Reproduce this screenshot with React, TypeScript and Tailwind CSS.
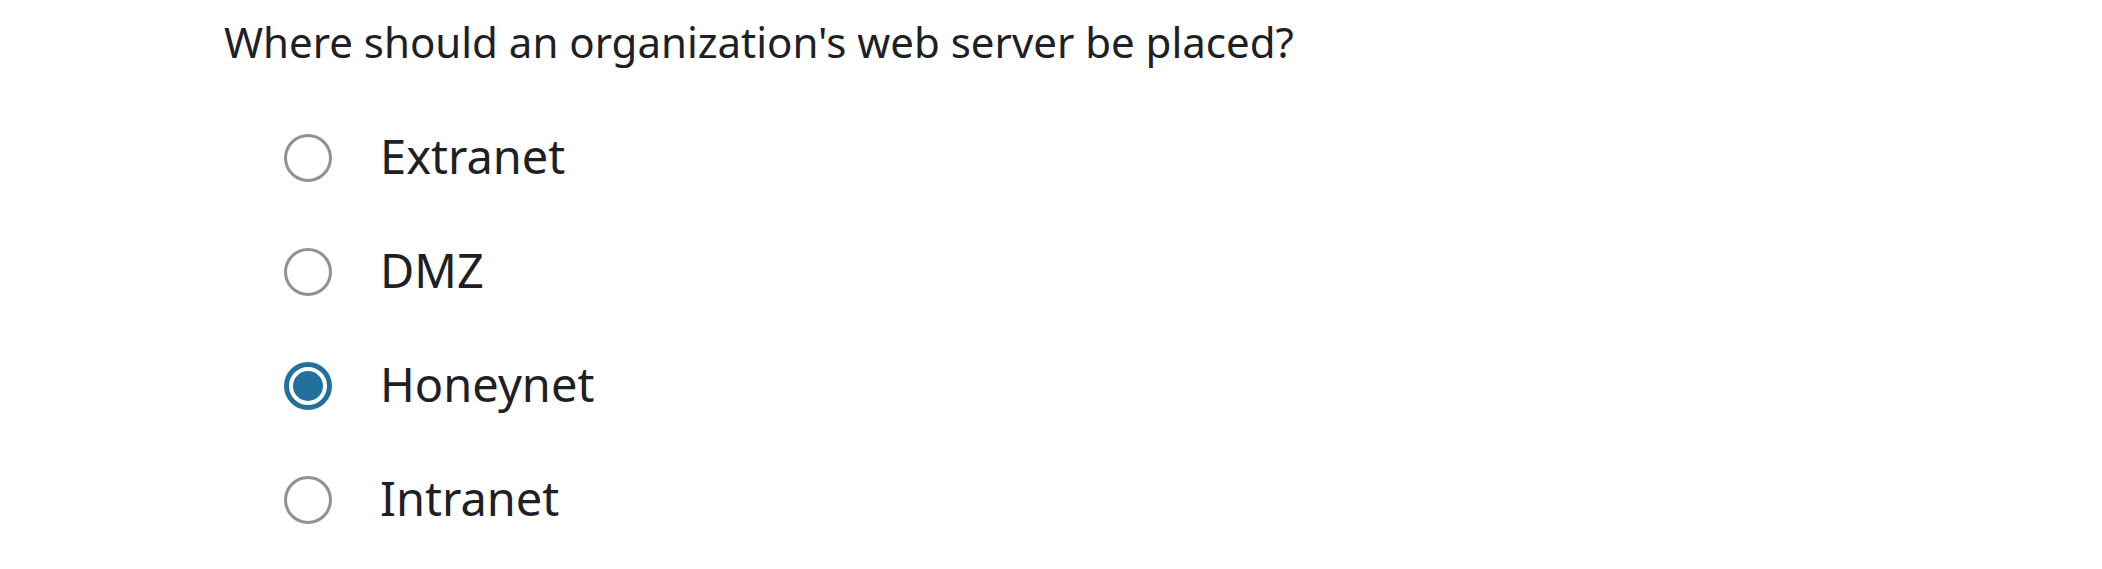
import React from 'react';

const options = ['Extranet', 'DMZ', 'Honeynet', 'Intranet'];
const selected = 'Honeynet';

function Radio({ checked }: { checked: boolean }) {
  if (checked) {
    return (
      <span className="flex h-[48px] w-[48px] shrink-0 items-center justify-center rounded-full border-[5px] border-[#22709b] bg-white">
        <span className="h-[30px] w-[30px] rounded-full bg-[#22709b]" />
      </span>
    );
  }
  return <span className="h-[48px] w-[48px] shrink-0 rounded-full border-[3px] border-[#8f9295] bg-white" />;
}

export default function App() {
  return (
    <div className="min-h-screen bg-white font-['Noto_Sans',sans-serif] text-[#1d2125]">
      <div className="pl-[224px] pt-[14px]">
        <p className="text-[42px] leading-[56px]">Where should an organization's web server be placed?</p>
        <div className="mt-[64px] flex flex-col gap-[66px] pl-[60px]">
          {options.map((o) => (
            <label key={o} className="flex h-[48px] items-center">
              <Radio checked={o === selected} />
              <span className="ml-[48px] pb-[4px] text-[47px] leading-[48px]">{o}</span>
            </label>
          ))}
        </div>
      </div>
    </div>
  );
}
